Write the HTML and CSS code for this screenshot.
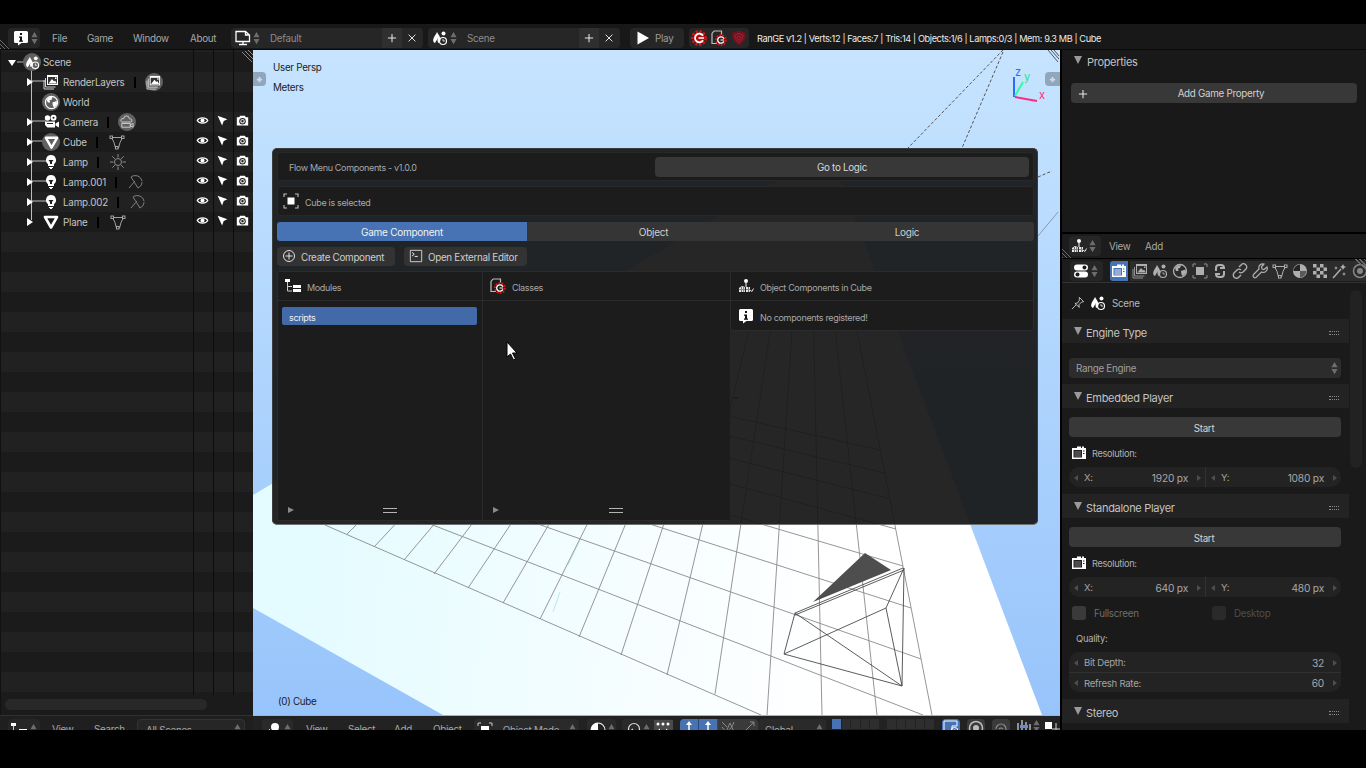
FILE: index.html
```html
<!DOCTYPE html>
<html lang="en">
<head>
<meta charset="utf-8">
<title>RanGE</title>
<link rel="stylesheet" href="styles.css">
</head>
<body>
<svg class="defs" aria-hidden="true">
  <symbol id="info" viewBox="0 0 16 16"><path fill="#fff" d="M2.5 1h11A1.5 1.5 0 0 1 15 2.5v9a1.5 1.5 0 0 1-1.500 1.500H8.500L5 15.500V13H2.500A1.500 1.500 0 0 1 1 11.500v-9A1.500 1.500 0 0 1 2.500 1z"/><path fill="#111" d="M7 3h2v2H7zM6 6.500h3V10.500h1v1.200H6v-1.200h1V7.700H6z"/></symbol>
  <symbol id="ud" viewBox="0 0 8 16"><path fill="#6d6d6d" d="M4 1l3.500 6H.5zM4 15l3.500-6H.5z"/></symbol>
  <symbol id="screen" viewBox="0 0 16 16"><path fill="none" stroke="#fff" stroke-width="1.300" d="M1 1.500h9.500l4 3.500v6.500H1zM10.500 1.500V5h4"/><path fill="none" stroke="#fff" stroke-width="1.300" d="M8 11.500v2.500M4 14.500h8"/></symbol>
  <symbol id="scene" viewBox="0 0 16 16"><path fill="#fff" d="M5 2C6.500 4.500 8.500 7 8.500 9.500a3.500 3.500 0 0 1-2.500 3.400A5 5 0 0 1 6 8L3 13C1.500 12.500 1 11 1.200 9.500 1.500 7 4 4.500 5 2z"/><circle cx="11.500" cy="3.500" r="2" fill="#fff"/><circle cx="11" cy="11" r="3.500" fill="none" stroke="#fff" stroke-width="1.200"/><path stroke="#fff" d="M11 9v2h2" fill="none" stroke-width=".8"/></symbol>
  <symbol id="plus" viewBox="0 0 16 16"><path stroke="#e6e6e6" stroke-width="1.400" d="M8 2.500v11M2.500 8h11"/></symbol>
  <symbol id="cross" viewBox="0 0 16 16"><path stroke="#e6e6e6" stroke-width="1.300" d="M3.500 3.500l9 9M12.500 3.500l-9 9"/></symbol>
  <symbol id="play" viewBox="0 0 16 16"><path fill="#fff" d="M2.500 1.500L14 8 2.500 14.500z"/></symbol>
  <symbol id="gear" viewBox="0 0 16 16"><circle cx="8" cy="8" r="6.200" fill="none" stroke="#e01010" stroke-width="3.400" stroke-dasharray="2.200 1.400"/><circle cx="8" cy="8" r="5.500" fill="#b80c0c"/><path d="M12 5.800A4.300 4.300 0 1 0 12 10.200" fill="none" stroke="#fff" stroke-width="1.800"/><path d="M7.500 8H13" stroke="#fff" stroke-width="1.500"/></symbol>
  <symbol id="gearfile" viewBox="0 0 16 16"><path fill="none" stroke="#bdbdbd" stroke-width="1.200" d="M3 1L1 3.500v10h5M3 1h7.500v3.500"/><circle cx="10" cy="10" r="4.600" fill="none" stroke="#e01010" stroke-width="2.600" stroke-dasharray="1.700 1.100"/><path d="M12.800 8.600A3.200 3.200 0 1 0 12.800 11.400" fill="none" stroke="#fff" stroke-width="1.300"/><path d="M9.500 10H13" stroke="#fff"/></symbol>
  <symbol id="shield" viewBox="0 0 16 16"><path fill="#6e1220" d="M8 .5l7 2.200C15 8 13.500 12.500 8 15.500 2.500 12.500 1 8 1 2.700z"/><path fill="none" stroke="#a3243a" d="M8 3.500l4.200 1.500C11.800 8.500 10.500 10.800 8 12.500 5.500 10.800 4.200 8.500 3.800 5zM8 6l2 1c-.2 1.500-1 2.500-2 3.200C7 9.500 6.200 8.500 6 7z"/></symbol>
  <symbol id="layers" viewBox="0 0 16 16"><path fill="none" stroke="#cfcfcf" d="M1 6v9h10M2.500 4v9h10"/><path fill="#fff" d="M4 1h11v10H4z"/><path fill="#333" d="M5 3h9v7H5z"/><path fill="#fff" d="M5.500 9.500L9 5l2 2.500 1-1 2 3zM12 3.500h1.500V5H12z"/></symbol>
  <symbol id="world" viewBox="0 0 16 16"><circle cx="8" cy="8" r="6.500" fill="none" stroke="#fff" stroke-width="1.300"/><path fill="#fff" d="M3 5c2-3 5-3 6-2.500L8 5 6 5.500 6.500 8 4 8zM9 8l4.500-1.500.5 3-3 4-1.500-2z"/></symbol>
  <symbol id="camera" viewBox="0 0 16 16"><circle cx="4.500" cy="4" r="2.700" fill="#fff"/><circle cx="10.500" cy="3.800" r="3" fill="#fff"/><circle cx="10.500" cy="3.800" r="1" fill="#222"/><path fill="#fff" d="M2 7.500h10v6H4.500L2 11zM12.500 9.500L16 7.500v6l-3.500-2z"/><path fill="#222" d="M4 9h6v1H4z"/></symbol>
  <symbol id="camdata" viewBox="0 0 16 16"><path fill="none" stroke="#d0d0d0" d="M3 4h2a3 3 0 0 1 6 0h1a2 2 0 0 1 1 3.500H3A2 2 0 0 1 3 4zM3 9h9v4H3zM12 10.500l3-1.500v4l-3-1.500z"/></symbol>
  <symbol id="tri" viewBox="0 0 16 16"><path fill="none" stroke="#fff" stroke-width="2.600" stroke-linejoin="round" d="M2 3h12L8 13.500z"/></symbol>
  <symbol id="lamp" viewBox="0 0 16 16"><path fill="#fff" d="M8 1a5 5 0 0 1 3 9v2H5v-2a5 5 0 0 1 3-9z"/><path fill="#222" d="M5.500 6h5l-1.500 2v2H7V8z"/><path fill="#fff" d="M6 13h4v1H9v1H7v-1H6z"/></symbol>
  <symbol id="eye" viewBox="0 0 16 16"><path fill="none" stroke="#fff" stroke-width="1.500" d="M1.500 8C4 3.800 12 3.800 14.500 8 12 12.200 4 12.200 1.500 8z"/><circle cx="8" cy="8" r="2.500" fill="#fff"/></symbol>
  <symbol id="cursor" viewBox="0 0 16 16"><path fill="#fff" d="M2 2l12 4.500-4.500 2L7.500 14z"/></symbol>
  <symbol id="render" viewBox="0 0 16 16"><path fill="#fff" d="M1 4h3l1-2h6l1 2h3v10H1z"/><circle cx="8" cy="8.800" r="4" fill="#222"/><circle cx="8" cy="8.800" r="2.800" fill="#d8d8d8"/><circle cx="8" cy="8.800" r="1.400" fill="#222"/></symbol>
  <symbol id="mdata" viewBox="0 0 16 16"><path fill="none" stroke="#b0b0b0" stroke-width=".9" d="M2.500 3.500h11L11 8.500 9.500 14h-3L5 8.500z"/><g fill="#1c1c1c" stroke="#b0b0b0" stroke-width=".9"><rect x="1" y="2" width="2.500" height="2.500"/><rect x="12.500" y="2" width="2.500" height="2.500"/><rect x="6.500" y="12.500" width="2.500" height="2.500"/></g></symbol>
  <symbol id="sun" viewBox="0 0 16 16"><circle cx="8" cy="8" r="3.500" fill="none" stroke="#8c8c8c"/><path stroke="#8c8c8c" d="M8 0v3.500M8 12.500V16M0 8h3.500M12.500 8H16M2.300 2.300l2.500 2.500M11.200 11.200l2.500 2.500M2.300 13.700l2.500-2.500M11.200 4.800l2.500-2.500"/></symbol>
  <symbol id="spot" viewBox="0 0 16 16"><path fill="none" stroke="#8c8c8c" stroke-width=".9" d="M3 3c4-3 10-1 11 4 .4 3-1.500 6-4 7L3 3zM7 7l-6 7" stroke-dasharray="14 1"/></symbol>
  <symbol id="selbox" viewBox="0 0 16 16"><path fill="#fff" d="M4.500 4.500h7v7h-7z"/><path fill="none" stroke="#bdbdbd" stroke-width="1.100" d="M1 4V1h3M12 1h3v3M15 12v3h-3M4 15H1v-3"/></symbol>
  <symbol id="pluscirc" viewBox="0 0 16 16"><circle cx="8" cy="8" r="6.300" fill="none" stroke="#e8e8e8" stroke-width="1.100"/><path stroke="#e8e8e8" stroke-width="1.100" d="M8 4v8M4 8h8"/></symbol>
  <symbol id="term" viewBox="0 0 16 16"><path fill="none" stroke="#e0e0e0" d="M1.500 1.500h13v13h-13z"/><path fill="none" stroke="#fff" d="M3.500 4l2.500 2-2.500 2M6.500 8.500H10"/></symbol>
  <symbol id="tree" viewBox="0 0 16 16"><path fill="#fff" d="M0 1h5v3H0zM8 7h8v3H8zM8 11h8v3H8z"/><path fill="none" stroke="#ccc" d="M2.500 4v9H7M2.500 8.500H7"/></symbol>
  <symbol id="logic" viewBox="0 0 16 16"><circle cx="8" cy="3" r="2" fill="#fff"/><path stroke="#fff" d="M8 5v4"/><path fill="#e8e8e8" d="M1 10l3-2 3 1v5H1zM8 9h4v5H8z"/><path fill="#222" d="M1 11.500h11v.6H1zM3 9v5h.6V9zM5.500 9v5h.6V9zM10 9v5h.6V9z"/><path stroke="#ddd" fill="none" d="M12 12l2 1.500 1.500-3"/></symbol>
  <symbol id="tog" viewBox="0 0 16 16"><rect x="1" y="1.500" width="14" height="6" rx="3" fill="#fff"/><circle cx="11.500" cy="4.500" r="2" fill="#1c1c1c"/><rect x="1" y="8.500" width="14" height="6" rx="3" fill="#fff"/><circle cx="4.500" cy="11.500" r="2" fill="#1c1c1c"/></symbol>
  <symbol id="rcam" viewBox="0 0 16 16"><path fill="#fff" d="M1 3h5V1.500h4V3h1V1.500h2V3h2v11H1z"/><path fill="#4772b3" d="M2.500 5H11v7.500H2.500zM12 5.500h1.500v1H12zM12 8h1.500v1H12z"/><path fill="#dfe8f5" d="M3.500 6.500h6.500v1H3.500zM3.500 8.500h6.500v1H3.500zM3.500 10.500h6.500v1H3.500z"/></symbol>
  <symbol id="rcamw" viewBox="0 0 16 16"><path fill="#fff" d="M1 3h5V1.500h4V3h1V1.500h2V3h2v11H1z"/><path fill="#222" d="M2.500 5H11v7.500H2.500zM12 5.500h1.500v1H12zM12 8h1.500v1H12z"/><path fill="#777" d="M3.500 6.500h6.500v1H3.500zM3.500 8.500h6.500v1H3.500zM3.500 10.500h6.500v1H3.500z"/></symbol>
  <symbol id="objbox" viewBox="0 0 16 16"><path fill="#fff" d="M4 4h8v8H4z"/><path fill="none" stroke="#ccc" d="M1 4V1h3M12 1h3v3M15 12v3h-3M4 15H1v-3"/></symbol>
  <symbol id="python" viewBox="0 0 16 16"><path fill="none" stroke="#fff" stroke-width="2" d="M4 8V5a3 3 0 0 1 3-3h2a3 3 0 0 1 3 3H8M12 8v3a3 3 0 0 1-3 3H7a3 3 0 0 1-3-3h4"/></symbol>
  <symbol id="link" viewBox="0 0 16 16"><path fill="none" stroke="#fff" stroke-width="1.400" d="M7 4l2-2a3 3 0 0 1 5 4l-3 3a3 3 0 0 1-4 0M9 12l-2 2a3 3 0 0 1-5-4l3-3a3 3 0 0 1 4 0"/></symbol>
  <symbol id="wrench" viewBox="0 0 16 16"><path fill="none" stroke="#fff" stroke-width="1.200" d="M15 4l-3 2.500-2-.5-.5-2L12 1a4 4 0 0 0-5 5L1.500 11.500A2 2 0 0 0 4 14.500L9.500 9A4 4 0 0 0 15 4z"/></symbol>
  <symbol id="mdatatab" viewBox="0 0 16 16"><path fill="none" stroke="#fff" d="M2.500 3.500h11L11 8.500 9.500 14h-3L5 8.500z"/><g fill="#1c1c1c" stroke="#fff"><rect x="1" y="2" width="2.500" height="2.500"/><rect x="12.500" y="2" width="2.500" height="2.500"/><rect x="6.500" y="12.500" width="2.500" height="2.500"/></g></symbol>
  <symbol id="mat" viewBox="0 0 16 16"><circle cx="8" cy="8" r="7" fill="#fff"/><path fill="#222" d="M8 1.500A6.500 6.500 0 0 0 1.500 8H8z"/><path fill="#777" d="M8 8h6.500A6.500 6.500 0 0 1 8 14.500z"/></symbol>
  <symbol id="tex" viewBox="0 0 16 16"><rect x="1" y="1" width="14" height="14" fill="#333"/><path fill="#fff" d="M1 1h3.500v3.500H1zM8 1h3.500v3.500H8zM4.500 4.500H8V8H4.500zM11.500 4.500H15V8h-3.500zM1 8h3.500v3.500H1zM8 8h3.500v3.500H8zM4.500 11.500H8V15H4.500zM11.500 11.500H15V15h-3.500z"/></symbol>
  <symbol id="part" viewBox="0 0 16 16"><path stroke="#fff" stroke-width="1.500" d="M1 15L9 6"/><path fill="#fff" d="M11 1l1 2 2 1-2 1-1 2-1-2-2-1 2-1zM4 3l.6 1.400L6 5l-1.400.6L4 7l-.6-1.400L2 5l1.400-.6zM12 9l.6 1.400L14 11l-1.400.6L12 13l-.6-1.400L10 11l1.400-.6z"/></symbol>
  <symbol id="phys" viewBox="0 0 16 16"><circle cx="8" cy="8" r="6.500" fill="none" stroke="#bdbdbd" stroke-width="1.500"/><circle cx="8" cy="8" r="3" fill="#bdbdbd"/></symbol>
  <symbol id="pin" viewBox="0 0 16 16"><path fill="none" stroke="#cfcfcf" d="M9.500 1.500l5 5-2.500.5-3 3 .5 3L4.500 8.500l3-.5 2-3zM6 10l-5 5"/></symbol>
  <symbol id="lock" viewBox="0 0 16 16"><path fill="none" stroke="#fff" d="M1 1h13v5H9v9H1z"/><circle cx="11.500" cy="11" r="3.500" fill="none" stroke="#fff"/><circle cx="11.500" cy="11" r="1.500" fill="#fff"/></symbol>
  <symbol id="ball" viewBox="0 0 16 16"><path stroke="#ddd" d="M1 10h7M4.500 7v6"/><circle cx="10" cy="5" r="4" fill="#fff"/></symbol>
  <symbol id="shade" viewBox="0 0 16 16"><circle cx="8" cy="8" r="7.500" fill="#fff"/><path fill="#222" d="M8 1.500a6.500 6.500 0 0 1 0 13z"/><path fill="#fff" d="M9 9h5a6 6 0 0 1-5 5z"/></symbol>
  <symbol id="pivot" viewBox="0 0 16 16"><circle cx="9" cy="7" r="5.500" fill="none" stroke="#e0e0e0" stroke-width="1.200"/><path fill="none" stroke="#e0e0e0" stroke-width="1.200" d="M1 14c2-3 3-4 7-7"/></symbol>
  <symbol id="dots" viewBox="0 0 16 16"><g fill="#fff"><circle cx="3" cy="3" r="1.500"/><circle cx="8" cy="3" r="1.500"/><circle cx="13" cy="3" r="1.500"/><path d="M2 10L5 7.500V12.500zM14 10L11 7.500V12.500z"/></g></symbol>
  <symbol id="arrowup" viewBox="0 0 16 16"><path stroke="#fff" stroke-width="1.500" d="M8 3v9"/><path fill="#fff" d="M8 1l3 4H5z"/><circle cx="8" cy="14" r="2" fill="#fff"/></symbol>
  <symbol id="rot" viewBox="0 0 16 16"><path fill="none" stroke="#8a8a8a" d="M2 2l5 5M14 2C12 8 8 12 2 14M2 7l4 5 4-9 4 9"/></symbol>
  <symbol id="scl" viewBox="0 0 16 16"><path fill="none" stroke="#8a8a8a" d="M2 14L14 2M10 2h4v4M1 12h3v3h-3z"/></symbol>
  <symbol id="snap" viewBox="0 0 16 16"><path fill="none" stroke="#8a8a8a" stroke-width="1.200" d="M3 9a5 5 0 0 1 10 0c0 3-3 5-6 5M6 9a2.500 2.500 0 0 1 4 0"/></symbol>
  <symbol id="hist" viewBox="0 0 16 16"><path stroke="#fff" d="M2 4v10M6 1v13M10 3v11M14 5v9"/><path fill="#5b8fe0" d="M4 6h8v3H4z"/></symbol>
  <symbol id="add" viewBox="0 0 16 16"><path fill="#fff" d="M0 3h7v7H0z"/><path stroke="#ccc" d="M11 4v10M7 10h9"/></symbol>
  <symbol id="tabplus" viewBox="0 0 8 8"><path stroke="#d3dbe4" stroke-width="2" d="M4 1v6M1 4h6"/></symbol>
</svg>

<div class="app">
  <header class="topbar">
    <i class="hatch hl"></i>
    <span class="grp w-info"><svg class="ic"><use href="#info"/></svg><svg class="ud"><use href="#ud"/></svg></span>
    <nav class="menu"><span>File</span><span>Game</span><span>Window</span><span>About</span></nav>
    <span class="grp w-screen"><span class="ico"><svg class="ic"><use href="#screen"/></svg><svg class="ud"><use href="#ud"/></svg></span><span class="nm">Default</span><span class="act"><svg class="ic12"><use href="#plus"/></svg></span><span class="act"><svg class="ic12"><use href="#cross"/></svg></span></span>
    <span class="grp w-scene"><span class="ico"><svg class="ic"><use href="#scene"/></svg><svg class="ud"><use href="#ud"/></svg></span><span class="nm">Scene</span><span class="act"><svg class="ic12"><use href="#plus"/></svg></span><span class="act"><svg class="ic12"><use href="#cross"/></svg></span></span>
    <span class="grp w-play"><svg class="ic"><use href="#play"/></svg><span class="pl">Play</span></span>
    <span class="grp w-tools"><svg class="ic"><use href="#gear"/></svg><svg class="ic"><use href="#gearfile"/></svg><svg class="ic"><use href="#shield"/></svg></span>
    <span class="stats">RanGE v1.2 | Verts:12 | Faces:7 | Tris:14 | Objects:1/6 | Lamps:0/3 | Mem: 9.3 MB | Cube</span>
  </header>

  <aside class="left">
    <div class="outliner">
      <svg class="tree-lines" viewBox="0 0 253 170"><path fill="none" stroke="#bdbdbd" d="M30.500 18V170M30.500 31H45M30.500 71H45M30.500 91H45M30.500 111H45M30.500 131H45M30.500 151H45M30.500 171H45M16 12H24"/><path stroke="#8a8a8a" d="M241 2l10 10M244 1l9 9M247 0l6 6"/></svg>
      <div class="row"><i class="arr down a0"></i><span class="bub b0"><svg class="ic"><use href="#scene"/></svg></span><span class="n">Scene</span></div>
      <div class="row"><i class="arr a1"></i><span class="ob"><svg class="ic"><use href="#layers"/></svg></span><span class="n">RenderLayers</span><b class="sep"></b><span class="bub"><svg class="ic"><use href="#layers"/></svg></span></div>
      <div class="row"><span class="ob"><span class="bub"><svg class="ic"><use href="#world"/></svg></span></span><span class="n">World</span></div>
      <div class="row"><i class="arr a1"></i><span class="ob"><svg class="ic"><use href="#camera"/></svg></span><span class="n">Camera</span><b class="sep"></b><span class="bub"><svg class="ic"><use href="#camdata"/></svg></span><span class="vis"><svg class="ic13"><use href="#eye"/></svg><svg class="ic13"><use href="#cursor"/></svg><svg class="ic13"><use href="#render"/></svg></span></div>
      <div class="row"><i class="arr a1"></i><span class="ob"><span class="bub"><svg class="ic"><use href="#tri"/></svg></span></span><span class="n">Cube</span><b class="sep"></b><span class="dat"><svg class="ic"><use href="#mdata"/></svg></span><span class="vis"><svg class="ic13"><use href="#eye"/></svg><svg class="ic13"><use href="#cursor"/></svg><svg class="ic13"><use href="#render"/></svg></span></div>
      <div class="row"><i class="arr a1"></i><span class="ob"><svg class="ic"><use href="#lamp"/></svg></span><span class="n">Lamp</span><b class="sep"></b><span class="dat"><svg class="ic"><use href="#sun"/></svg></span><span class="vis"><svg class="ic13"><use href="#eye"/></svg><svg class="ic13"><use href="#cursor"/></svg><svg class="ic13"><use href="#render"/></svg></span></div>
      <div class="row"><i class="arr a1"></i><span class="ob"><svg class="ic"><use href="#lamp"/></svg></span><span class="n">Lamp.001</span><b class="sep"></b><span class="dat"><svg class="ic"><use href="#spot"/></svg></span><span class="vis"><svg class="ic13"><use href="#eye"/></svg><svg class="ic13"><use href="#cursor"/></svg><svg class="ic13"><use href="#render"/></svg></span></div>
      <div class="row"><i class="arr a1"></i><span class="ob"><svg class="ic"><use href="#lamp"/></svg></span><span class="n">Lamp.002</span><b class="sep"></b><span class="dat"><svg class="ic"><use href="#spot"/></svg></span><span class="vis"><svg class="ic13"><use href="#eye"/></svg><svg class="ic13"><use href="#cursor"/></svg><svg class="ic13"><use href="#render"/></svg></span></div>
      <div class="row"><i class="arr a1"></i><span class="ob"><svg class="ic"><use href="#tri"/></svg></span><span class="n">Plane</span><b class="sep"></b><span class="dat"><svg class="ic"><use href="#mdata"/></svg></span><span class="vis"><svg class="ic13"><use href="#eye"/></svg><svg class="ic13"><use href="#cursor"/></svg><svg class="ic13"><use href="#render"/></svg></span></div>
      <i class="col c1"></i><i class="col c2"></i><i class="col c3"></i>
    </div>
    <div class="hscroll"><span></span></div>
    <div class="foot footl">
      <span class="grp g-tree"><svg class="ic"><use href="#tree"/></svg><svg class="ud"><use href="#ud"/></svg></span>
      <span class="ft s1">View</span><span class="ft s2">Search</span>
      <span class="grp g-all"><span>All Scenes</span><svg class="ud"><use href="#ud"/></svg></span>
    </div>
  </aside>

  <main class="view">
    <div class="canvas">
      <svg class="scene" viewBox="253 50 807 665" preserveAspectRatio="none">
        <defs>
          <linearGradient id="sky" x1="0" y1="0" x2="0" y2="1"><stop offset="0" stop-color="#c6e4ff"/><stop offset="1" stop-color="#97c4fb"/></linearGradient>
          <linearGradient id="gnd" gradientUnits="userSpaceOnUse" x1="300" y1="600" x2="820" y2="640"><stop offset="0" stop-color="#e4fbff"/><stop offset="1" stop-color="#ffffff"/></linearGradient>
        </defs>
        <rect x="253" y="50" width="807" height="665" fill="url(#sky)"/>
        <path fill="url(#gnd)" d="M253 495L829 150 1042 715H443L253 608z"/>
        <g fill="none" stroke="#8a8a8a" stroke-width=".9">
          <path d="M851 300L932 715M832 300L877 715M813 300L822 715M794 300L767 715M775 300L715 694M756 300L667 675M737 300L621 655M718 300L579 637M699 300L540 619M680 300L503 603M661 300L468 588M642 300L434 574M623 300L404 560M604 300L374 547M586 300L347 534"/>
          <path d="M325 525L761 715M345 491L923 715M345 456L921 659M345 426L911 608M345 401L903 566M345 379L896 529M345 360L890 499M345 344L884 473M345 330L880 450"/>
        </g>
        <path d="M553 612L560 592M568 565L580 540" stroke="#8fdccf" stroke-width=".8" opacity=".7"/>
        <path d="M734 398h4" stroke="#a03030" stroke-width="1.500"/>
        <g fill="none" stroke="#555" stroke-dasharray="3 2">
          <path d="M1003 50L908 148M1003 52L962 148M1038 177L1052 171"/>
        </g>
        <path d="M1038 236L1058 212" stroke="#8a9aa8"/>
        <path fill="#4e4e4e" d="M813 602L865 553 891 570z"/>
        <g fill="none" stroke="#4a4a4a" stroke-width=".9">
          <path d="M795 613L903 568M795 615L904 570M795 613L784 654 902 686 904 568M784 654L886 608 904 568M886 608L902 686M795 613L902 686"/>
        </g>
        <path d="M1014 97V77" stroke="#2a6cff" stroke-width="2"/>
        <path d="M1015 96L1023 82" stroke="#2dffa0" stroke-width="2"/>
        <path d="M1015 97L1037 101" stroke="#ff2a7a" stroke-width="2"/>
        <text class="ax" x="1015" y="76" fill="#2a6cff">z</text>
        <text class="ax" x="1024" y="81" fill="#2adf9a">y</text>
        <text class="ax" x="1039" y="99" fill="#ff2a7a">x</text>
        <path stroke="#555" d="M1048 50l10 12M1051 50l8 9M1054 50l5 6"/>
      </svg>
      <span class="vlabel l1">User Persp</span>
      <span class="vlabel l2">Meters</span>
      <span class="vlabel l3">(0) Cube</span>
      <span class="vtab tl"><svg class="tp"><use href="#tabplus"/></svg></span>
      <span class="vtab tr"><svg class="tp"><use href="#tabplus"/></svg></span>

      <section class="flow">
        <div class="box titlebar"><span class="flow-title sm">Flow Menu Components - v1.0.0</span><button class="btn logic-btn">Go to Logic</button></div>
        <div class="box selected"><svg class="ic"><use href="#selbox"/></svg><span class="sm">Cube is selected</span></div>
        <div class="tabs"><span class="tab on">Game Component</span><span class="tab">Object</span><span class="tab">Logic</span></div>
        <div class="actions"><button class="btn a-create"><svg class="ic14"><use href="#pluscirc"/></svg>Create Component</button><button class="btn a-open"><svg class="ic14"><use href="#term"/></svg>Open External Editor</button></div>
        <div class="cols3">
          <div class="pane p-mod">
            <div class="pane-h"><svg class="ic"><use href="#tree"/></svg><span class="sm">Modules</span></div>
            <div class="list"><span class="item sm">scripts</span></div>
            <div class="pane-f"><i class="tri-r"></i><i class="grip"></i></div>
          </div>
          <div class="pane p-cls">
            <div class="pane-h"><svg class="ic"><use href="#gearfile"/></svg><span class="sm">Classes</span></div>
            <div class="list"></div>
            <div class="pane-f"><i class="tri-r"></i><i class="grip"></i></div>
          </div>
          <div class="pane-r">
            <div class="pane-h"><svg class="ic"><use href="#logic"/></svg><span class="sm">Object Components in Cube</span></div>
            <div class="none"><svg class="ic"><use href="#info"/></svg><span class="sm">No components registered!</span></div>
          </div>
        </div>
      </section>
      <svg class="pointer" viewBox="0 0 12 20"><path fill="#fff" stroke="#000" d="M1 1v15l3.500-3 3 6 2-1-3-6H11z"/></svg>
    </div>
    <div class="foot footv">
      <span class="grp g-ball"><svg class="ic"><use href="#ball"/></svg><svg class="ud"><use href="#ud"/></svg></span>
      <span class="ft f1">View</span><span class="ft f2">Select</span><span class="ft f3">Add</span><span class="ft f4">Object</span>
      <span class="grp g-mode"><svg class="ic"><use href="#objbox"/></svg><span>Object Mode</span><svg class="ud"><use href="#ud"/></svg></span>
      <span class="grp g-shade"><svg class="ic"><use href="#shade"/></svg><svg class="ud"><use href="#ud"/></svg></span>
      <span class="grp g-piv"><svg class="ic"><use href="#pivot"/></svg><svg class="ud"><use href="#ud"/></svg><span class="pd"><svg class="ic"><use href="#dots"/></svg></span></span>
      <span class="grp g-man"><span class="mb"><svg class="ic"><use href="#arrowup"/></svg></span><span class="mb"><svg class="ic"><use href="#arrowup"/></svg></span><span class="mg"><svg class="ic"><use href="#rot"/></svg></span><span class="mg"><svg class="ic"><use href="#scl"/></svg></span></span>
      <span class="grp g-glob"><span>Global</span><svg class="ud"><use href="#ud"/></svg></span>
      <span class="layers"><i class="first"></i><i></i><i></i><i></i><i></i></span>
      <span class="layers l2nd"><i></i><i></i><i></i><i></i><i></i></span>
      <span class="sq on"><svg class="ic"><use href="#lock"/></svg></span>
      <span class="sq"><svg class="ic"><use href="#phys"/></svg></span>
      <span class="sq"><svg class="ic"><use href="#snap"/></svg></span>
      <svg class="ic hs"><use href="#hist"/></svg><svg class="ud ud-f"><use href="#ud"/></svg>
      <svg class="ic ad"><use href="#add"/></svg>
    </div>
  </main>

  <aside class="right">
    <div class="logic-props">
      <div class="ph first"><i class="arr-p"></i><span>Properties</span></div>
      <button class="btn add-prop"><svg class="ic12"><use href="#plus"/></svg><span>Add Game Property</span></button>
    </div>
    <div class="logic-foot">
      <i class="hatch hb"></i>
      <span class="grp g-logic"><svg class="ic"><use href="#logic"/></svg><svg class="ud"><use href="#ud"/></svg></span>
      <span class="ft v1">View</span><span class="ft">Add</span>
    </div>
    <div class="prop-tabs">
      <i class="hatch ht"></i>
      <span class="grp g-tog"><svg class="ic"><use href="#tog"/></svg><svg class="ud"><use href="#ud"/></svg></span>
      <span class="ptab on"><svg class="ic"><use href="#rcam"/></svg></span>
      <span class="ptab"><svg class="ic"><use href="#layers"/></svg></span>
      <span class="ptab"><svg class="ic"><use href="#scene"/></svg></span>
      <span class="ptab"><svg class="ic"><use href="#world"/></svg></span>
      <span class="ptab"><svg class="ic"><use href="#objbox"/></svg></span>
      <span class="ptab"><svg class="ic"><use href="#python"/></svg></span>
      <span class="ptab"><svg class="ic"><use href="#link"/></svg></span>
      <span class="ptab"><svg class="ic"><use href="#wrench"/></svg></span>
      <span class="ptab"><svg class="ic"><use href="#mdatatab"/></svg></span>
      <span class="ptab"><svg class="ic"><use href="#mat"/></svg></span>
      <span class="ptab"><svg class="ic"><use href="#tex"/></svg></span>
      <span class="ptab"><svg class="ic"><use href="#part"/></svg></span>
      <span class="ptab"><svg class="ic"><use href="#phys"/></svg></span>
    </div>
    <div class="props">
      <i class="vscroll"></i>
      <div class="crumb"><svg class="ic14"><use href="#pin"/></svg><svg class="ic"><use href="#scene"/></svg><span>Scene</span></div>
      <div class="ph"><i class="arr-p"></i><span>Engine Type</span><i class="dots"></i></div>
      <div class="body b-engine"><div class="select"><span>Range Engine</span><svg class="ud"><use href="#ud"/></svg></div></div>
      <div class="ph"><i class="arr-p"></i><span>Embedded Player</span><i class="dots"></i></div>
      <div class="body b-player">
        <button class="btn start">Start</button>
        <div class="res"><svg class="ic"><use href="#rcamw"/></svg><span>Resolution:</span></div>
        <div class="pair">
          <span class="num"><i class="tl-a"></i><span>X:</span><span class="v">1920 px</span><i class="tr-a"></i></span>
          <span class="num"><i class="tl-a"></i><span>Y:</span><span class="v">1080 px</span><i class="tr-a"></i></span>
        </div>
      </div>
      <div class="ph"><i class="arr-p"></i><span>Standalone Player</span><i class="dots"></i></div>
      <div class="body b-player b-stand">
        <button class="btn start">Start</button>
        <div class="res"><svg class="ic"><use href="#rcamw"/></svg><span>Resolution:</span></div>
        <div class="pair">
          <span class="num"><i class="tl-a"></i><span>X:</span><span class="v">640 px</span><i class="tr-a"></i></span>
          <span class="num"><i class="tl-a"></i><span>Y:</span><span class="v">480 px</span><i class="tr-a"></i></span>
        </div>
        <div class="checks"><label class="chk"><i></i><span>Fullscreen</span></label><label class="chk dim"><i></i><span>Desktop</span></label></div>
        <div class="quality">Quality:</div>
        <div class="stack">
          <span class="num"><i class="tl-a"></i><span>Bit Depth:</span><span class="v">32</span><i class="tr-a"></i></span>
          <span class="num"><i class="tl-a"></i><span>Refresh Rate:</span><span class="v">60</span><i class="tr-a"></i></span>
        </div>
      </div>
      <div class="ph"><i class="arr-p"></i><span>Stereo</span><i class="dots"></i></div>
    </div>
  </aside>
</div>
</body>
</html>
```
FILE: styles.css
```css
* { box-sizing: border-box; }
html, body { margin: 0; height: 100%; background: #000; overflow: hidden; }
body { font-family: Inter, "Liberation Sans", sans-serif; font-size: 9.8px; letter-spacing: -0.28px; color: #bcbcbc; }
.defs { width: 0; height: 0; position: absolute; }
i { display: block; font-style: normal; }
button { font: inherit; letter-spacing: inherit; border: 0; color: inherit; padding: 0; white-space: nowrap; }
svg { display: block; flex: none; }
.ic { width: 16px; height: 16px; }
.ic12 { width: 12px; height: 12px; }
.ic13 { width: 13px; height: 13px; }
.ic14 { width: 14px; height: 14px; }
.ud { width: 7px; height: 14px; }
.sm { font-size: 9px; letter-spacing: -0.33px; }
.hatch { position: absolute; width: 10px; height: 10px; background: repeating-linear-gradient(45deg, #6a6a6a 0 1px, transparent 1px 3px); }
.hl { left: 0; bottom: 0; clip-path: polygon(0 0, 100% 100%, 0 100%); }
.hb { left: 0; bottom: 0; clip-path: polygon(0 0, 100% 100%, 0 100%); }
.ht { right: 0; top: 0; width: 12px; height: 12px; clip-path: polygon(0 0, 100% 0, 100% 100%); z-index: 1; }

.app { margin-top: 24px; height: 706px; overflow: hidden; display: grid; grid-template-columns: 253px 807px 306px; grid-template-rows: 26px 680px; background: #000; }

.topbar { position: relative; grid-column: 1 / 4; background: #181818; border-bottom: 1px solid #0a0a0a; display: flex; align-items: center; padding: 2px 0 0 8px; }
.grp { display: inline-flex; align-items: center; background: #262626; border-radius: 4px; height: 20px; flex: none; }
.w-info { width: 32px; padding-left: 5px; gap: 2px; }
.menu { display: flex; width: 191px; flex: none; padding: 1px 0 0 12px; color: #a8a8a8; }
.menu span:nth-child(1) { width: 35px; }
.menu span:nth-child(2) { width: 46px; }
.menu span:nth-child(3) { width: 57px; }
.w-screen, .w-scene { width: 192px; overflow: hidden; padding-right: 1px; }
.w-screen { margin-right: 5px; }
.w-scene { margin-right: 10px; }
.ico { width: 31px; display: flex; align-items: center; gap: 2px; padding-left: 4px; flex: none; }
.nm { flex: 1; padding: 1px 0 0 8px; color: #8c8c8c; }
.act { width: 20px; height: 20px; display: flex; align-items: center; justify-content: center; background: #2f2f2f; }
.act + .act { background: #262626; }
.w-play { width: 54px; gap: 4px; padding-left: 5px; color: #9c9c9c; }
.pl { padding-top: 1px; }
.w-tools { width: 60px; margin-left: 5px; padding-left: 2px; gap: 4px; }
.stats { margin-left: 8px; color: #ececec; white-space: nowrap; font-size: 9.2px; letter-spacing: -0.39px; padding-top: 1px; }

.left { display: flex; flex-direction: column; background: #1b1b1b; min-height: 0; }
.outliner { position: relative; height: 645px; padding-top: 2px; flex: none; background-image: repeating-linear-gradient(#212121 0 20px, #1b1b1b 20px 40px); background-size: 100% 40px; background-position: 0 22px; border-left: 1px solid #111; }
.tree-lines { position: absolute; left: 0; top: 0; width: 253px; height: 170px; }
.row { position: relative; height: 20px; display: flex; align-items: center; color: #c4c4c4; white-space: nowrap; letter-spacing: -0.2px; }
.arr { position: absolute; width: 0; height: 0; border-style: solid; border-color: transparent; }
.a1 { left: 26px; top: 6px; border-width: 4px 0 4px 6px; border-left-color: #fff; }
.a0.down { left: 7px; top: 8px; border-width: 6px 4px 0; border-top-color: #fff; }
.bub { width: 18px; height: 18px; border-radius: 50%; background: #616161; display: flex; align-items: center; justify-content: center; flex: none; }
.bub .ic { width: 15px; height: 15px; }
.b0 { margin-left: 22px; margin-right: 2px; }
.ob { margin: 0 4px 0 42px; width: 16px; display: flex; justify-content: center; flex: none; }
.sep { width: 2px; height: 11px; background: #000; margin: 0 9px; flex: none; }
.dat { margin-left: 2px; }
.vis { position: absolute; left: 195px; top: 2px; display: flex; gap: 7px; }
.col { position: absolute; top: 0; bottom: 0; width: 1px; background: #0c0c0c; }
.c1 { left: 192px; } .c2 { left: 212px; } .c3 { left: 232px; }
.hscroll { height: 20px; padding: 4px 46px 5px 4px; flex: none; border-left: 1px solid #111; }
.hscroll span { display: block; height: 11px; border-radius: 6px; background: #282828; }
.foot { display: flex; align-items: flex-start; height: 26px; flex: none; border-top: 1px solid #303030; background: #1f1f1f; padding-top: 3px; white-space: nowrap; color: #a8a8a8; }
.foot .grp { height: 22px; }
.foot .ft { padding-top: 5px; flex: none; }
.foot .g-tree { width: 32px; margin-left: 8px; padding-left: 3px; gap: 3px; }
.s1 { width: 42px; margin-left: 12px; }
.s2 { width: 43px; }
.g-all { width: 108px; padding: 0 3px 0 8px; justify-content: space-between; border: 1px solid #333; }

.view { display: flex; flex-direction: column; min-width: 0; min-height: 0; }
.canvas { position: relative; height: 665px; flex: none; overflow: hidden; }
.scene { position: absolute; left: 0; top: 0; width: 807px; height: 665px; }
.ax { font: 11px Inter, "Liberation Sans", sans-serif; }
.vlabel { position: absolute; left: 20px; color: #222; }
.l1 { top: 12px; } .l2 { top: 32px; } .l3 { left: 25px; top: 646px; }
.vtab { position: absolute; top: 22px; width: 13px; height: 14px; background: #8fa6bd; display: flex; align-items: center; justify-content: center; }
.tp { width: 7px; height: 7px; }
.tl { left: 0; border-radius: 0 4px 4px 0; }
.tr { right: 0; width: 15px; border-radius: 4px 0 0 4px; }
.pointer { position: absolute; left: 253px; top: 291px; width: 12px; height: 20px; }

.flow { position: absolute; left: 19px; top: 98px; width: 766px; height: 377px; background: rgba(21,21,21,.93); border: 1px solid #3c3c3c; border-bottom-color: #707070; border-radius: 5px; padding: 3px 3px 3px 4px; display: flex; flex-direction: column; color: #a8a8a8; }
.box { background: #1c1c1c; border: 1px solid #282828; border-radius: 3px; display: flex; align-items: center; flex: none; }
.titlebar { height: 29px; padding: 0 4px 0 11px; }
.flow-title { width: 366px; flex: none; padding-top: 1px; }
.logic-btn { flex: 1; height: 20px; border-radius: 4px; color: #d8d8d8; padding-top: 1px; }
.btn { background: #383838; }
.selected { height: 30px; margin-top: 5px; padding-left: 5px; gap: 6px; }
.selected .sm { padding-top: 2px; }
.tabs { display: grid; grid-template-columns: 250px 253px 254px; height: 19px; margin-top: 6px; flex: none; border-radius: 3px; overflow: hidden; font-size: 10px; letter-spacing: -0.25px; }
.tab { background: #353535; color: #cfcfcf; display: flex; align-items: center; justify-content: center; padding-top: 1px; }
.tab.on { background: #4772b3; color: #f2f2f2; }
.actions { display: flex; gap: 9px; margin-top: 6px; height: 19px; flex: none; }
.actions .btn { display: flex; align-items: center; gap: 5px; padding: 1px 0 0 5px; height: 19px; border-radius: 4px; color: #cfcfcf; background: #333; }
.actions .btn svg { margin-top: -2px; }
.a-create { width: 118px; }
.a-open { width: 123px; }
.cols3 { display: flex; margin-top: 5px; flex: 1; min-height: 0; }
.pane { display: flex; flex-direction: column; background: #1c1c1c; border: 1px solid #2b2b2b; border-right: 0; }
.p-mod { width: 205px; border-radius: 3px 0 0 3px; }
.p-cls { width: 248px; }
.pane-r { width: 304px; align-self: flex-start; background: #1c1c1c; border: 1px solid #2b2b2b; border-radius: 0 3px 3px 0; }
.pane-h { height: 29px; border-bottom: 1px solid #2b2b2b; display: flex; align-items: center; gap: 6px; padding-left: 7px; flex: none; }
.pane-h .sm { padding-top: 2px; }
.list { flex: 1; padding: 6px 5px 6px 4px; }
.item { display: flex; align-items: center; height: 18px; padding: 2px 0 0 7px; background: #4269a8; border-radius: 2px; color: #f0f0f0; }
.none { height: 29px; display: flex; align-items: center; gap: 6px; padding-left: 7px; }
.none .sm { padding-top: 3px; }
.pane-f { height: 20px; position: relative; flex: none; }
.tri-r { position: absolute; left: 10px; top: 7px; width: 0; height: 0; border-style: solid; border-color: transparent; border-width: 3px 0 3px 6px; border-left-color: #8a8a8a; }
.grip { position: absolute; left: 105px; top: 8px; width: 14px; height: 5px; border-top: 1px solid #b4b4b4; border-bottom: 1px solid #b4b4b4; }
.p-cls .grip { left: 126px; }

.footv { background: #222; border-top: 1px solid #b0b0b0; height: 17px; padding-left: 9px; overflow: visible; }
.footv .grp { background: #2a2a2a; }
.footv .g-ball { width: 31px; padding-left: 3px; gap: 3px; }
.f1 { width: 42px; margin-left: 13px; } .f2 { width: 46px; } .f3 { width: 39px; } .f4 { width: 41px; }
.footv .g-mode { width: 105px; padding: 0 3px; gap: 4px; justify-content: space-between; }
.footv .g-shade { width: 29px; margin-left: 8px; padding-left: 3px; gap: 2px; }
.footv .g-piv { width: 51px; margin-left: 6px; padding-left: 3px; gap: 2px; }
.pd { width: 19px; height: 20px; background: #4a4a4a; display: block; padding: 1px; margin-left: 2px; }
.footv .g-man { width: 78px; margin-left: 7px; overflow: hidden; align-items: flex-start; }
.mb { width: 19px; height: 22px; background: #4772b3; display: flex; justify-content: center; align-items: flex-start; padding-top: 1px; border-right: 1px solid #2b4a7a; }
.mg { width: 20px; height: 22px; background: #3a3a3a; display: flex; justify-content: center; padding-top: 1px; }
.footv .g-glob { width: 68px; padding: 0 3px 0 7px; justify-content: space-between; }
.layers { display: grid; grid-template-columns: repeat(5, 1fr); width: 48px; margin-left: 6px; flex: none; }
.layers i { background: #2e2e2e; height: 10px; border-right: 1px solid #222; }
.layers .first { background: #4772b3; }
.l2nd { margin-left: 7px; }
.sq { width: 18px; height: 22px; background: #3a3a3a; border-radius: 4px; margin-left: 7px; display: flex; justify-content: center; padding-top: 1px; flex: none; }
.sq.on { background: #4772b3; }
.hs { margin-left: 6px; }
.ud-f { margin-left: 1px; }
.ad { margin-left: 5px; }

.right { display: flex; flex-direction: column; background: #000; padding-left: 2px; min-height: 0; }
.logic-props { height: 182px; background: #191919; flex: none; }
.ph { height: 24px; background: #232323; display: flex; align-items: center; padding: 4px 0 0 12px; font-size: 11px; letter-spacing: -0.3px; color: #c2c2c2; position: relative; flex: none; width: 287px; gap: 4px; }
.ph.first { background: transparent; height: 20px; margin-top: 2px; padding-top: 0; gap: 5px; }
.arr-p { width: 0; height: 0; border-style: solid; border-color: transparent; border-width: 8px 4.500px 0; border-top-color: #9a9a9a; margin-top: -4px; }
.dots { position: absolute; right: 10px; top: 12px; width: 10px; height: 4px; border-top: 1px dotted #8a8a8a; border-bottom: 1px dotted #8a8a8a; }
.add-prop { width: 286px; height: 20px; margin: 11px 0 0 9px; border-radius: 4px; display: flex; align-items: center; color: #d0d0d0; padding: 1px 4px 0 6px; }
.add-prop span { flex: 1; text-align: center; }
.logic-foot { position: relative; height: 24px; margin-top: 2px; background: #1c1c1c; display: flex; align-items: center; flex: none; color: #a8a8a8; }
.g-logic { width: 32px; margin-left: 7px; padding-left: 2px; gap: 2px; }
.logic-foot .ft { flex: none; }
.v1 { width: 36px; margin-left: 8px; }
.prop-tabs { position: relative; height: 24px; margin-top: 1px; background: #1c1c1c; border-bottom: 1px solid #333; display: flex; align-items: center; flex: none; overflow: hidden; }
.g-tog { width: 33px; margin: 0 7px 0 8px; padding-left: 3px; gap: 2px; }
.ptab { width: 20px; height: 20px; background: #2c2c2c; display: flex; align-items: center; justify-content: center; flex: none; }
.ptab .ic { opacity: .62; }
.ptab.on { background: #4772b3; border-radius: 3px 0 0 3px; width: 18px; margin-right: 2px; }
.ptab.on .ic { opacity: 1; }
.props { position: relative; flex: 1; background: #1a1a1a; min-height: 0; overflow: hidden; }
.vscroll { position: absolute; left: 288px; top: 7px; width: 12px; height: 178px; border-radius: 6px; background: #222; }
.crumb { height: 36px; display: flex; align-items: center; padding: 4px 0 0 9px; gap: 5px; }
.crumb span { margin-left: 1px; color: #b8b8b8; }
.body { width: 287px; padding: 0 7px; }
.b-engine { height: 41px; padding-top: 15px; }
.select { width: 272px; height: 20px; border-radius: 4px; background: #2c2c2c; display: flex; align-items: center; justify-content: space-between; padding: 0 3px 0 7px; color: #a0a0a0; }
.b-player { height: 86px; padding-top: 9px; }
.b-stand { height: 181px; }
.start { display: block; width: 272px; height: 20px; border-radius: 4px; color: #d4d4d4; padding: 2px 2px 0 0; text-align: center; }
.res { display: flex; align-items: center; height: 16px; margin-top: 8px; gap: 5px; padding-left: 2px; font-size: 9.2px; letter-spacing: -0.3px; color: #b0b0b0; }
.pair { display: flex; width: 272px; height: 20px; margin-top: 6px; border-radius: 10px; background: #232323; overflow: hidden; }
.pair .num { width: 136px; }
.pair .num + .num { border-left: 1px solid #333; }
.num { display: flex; align-items: center; height: 20px; padding: 1px 4px 0 5px; gap: 6px; color: #a4a4a4; position: relative; font-size: 9.6px; }
.v { margin-left: auto; color: #a8a8a8; font-size: 10.2px; letter-spacing: -0.2px; }
.tl-a, .tr-a { width: 0; height: 0; border-style: solid; border-color: transparent; border-width: 3px 4px 3px 0; border-right-color: #4e4e4e; flex: none; }
.tr-a { border-width: 3px 0 3px 4px; border-left-color: #4e4e4e; margin-left: 3px; }
.checks { display: flex; height: 16px; margin-top: 8px; padding-left: 3px; }
.chk { display: flex; align-items: center; gap: 8px; width: 140px; flex: none; color: #6e6e6e; }
.chk i { width: 14px; height: 14px; border-radius: 3px; background: #3a3a3a; flex: none; }
.chk.dim { color: #4e4e4e; }
.chk.dim i { background: #2a2a2a; }
.quality { height: 16px; margin-top: 9px; padding: 1px 0 0 7px; font-size: 9.4px; color: #b0b0b0; line-height: 16px; }
.stack { width: 272px; margin-top: 6px; border-radius: 10px; background: #232323; overflow: hidden; }
.stack .num + .num { border-top: 1px solid #303030; }
```
